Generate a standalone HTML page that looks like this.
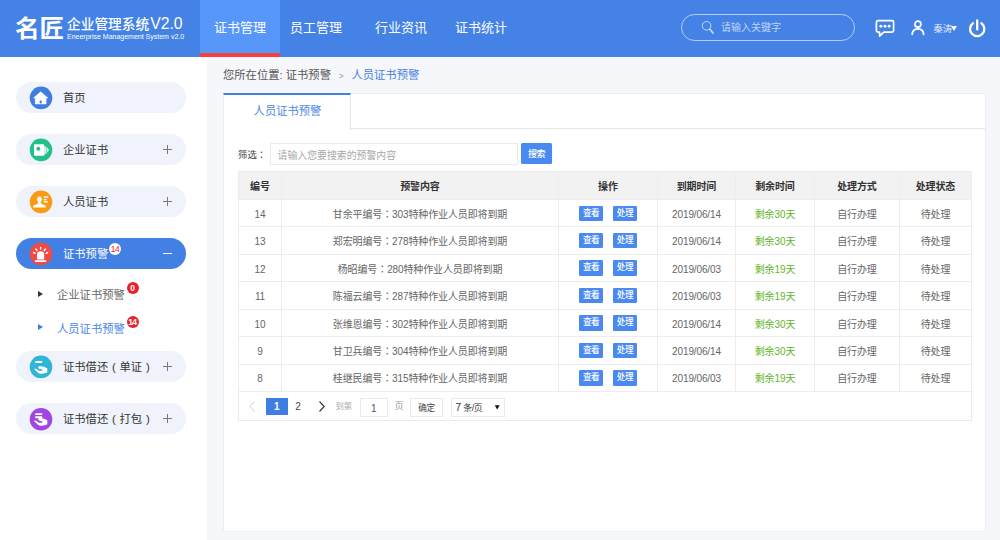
<!DOCTYPE html>
<html lang="zh-CN">
<head>
<meta charset="utf-8">
<title>企业管理系统V2.0</title>
<style>
*{box-sizing:border-box;margin:0;padding:0}
html,body{width:1000px;height:540px;overflow:hidden}
body{position:relative;background:#f6f7fb;font-family:"Liberation Sans","Noto Sans CJK SC",sans-serif;color:#333;font-size:11px}
.abs{position:absolute}
/* header */
#hd{position:absolute;left:0;top:0;width:1000px;height:57px;background:#4482e5}
#logo{position:absolute;left:14.8px;top:10.5px;font-size:23.6px;font-weight:700;color:#fff;letter-spacing:-0.2px;line-height:36px;white-space:nowrap;transform-origin:0 0;transform:scaleX(1.05)}
#t1{position:absolute;left:67px;top:13px;font-size:13.7px;font-weight:500;color:#fff;line-height:22px;white-space:nowrap}
#t2{position:absolute;left:67px;top:32px;font-size:7px;color:#fff;line-height:9px;white-space:nowrap}
.nav{position:absolute;top:0;height:57px;line-height:56px;color:#fff;font-size:13px;text-align:center;white-space:nowrap}
.nav.on{background:#5797fa;border-bottom:4px solid #f5403f;line-height:56px}
#srch{position:absolute;left:681px;top:14px;width:174px;height:27px;border:1px solid #b6cef5;border-radius:14px}
#srch span{position:absolute;left:39px;top:0;line-height:25px;font-size:10px;color:#c3d6f6;white-space:nowrap}
#uname{position:absolute;left:933.5px;top:20.5px;font-size:9.3px;color:#eaf1fd;line-height:16px;white-space:nowrap}
/* sidebar */
#sb{position:absolute;left:0;top:57px;width:207px;height:483px;background:#fff}
.pill{position:absolute;left:16px;width:170px;height:31px;border-radius:16px;background:#f0f3fb;font-size:11.3px;color:#333;line-height:31px}
.pill .ic{position:absolute;left:13px;top:4px;width:24px;height:24px}
.pill .tx{position:absolute;left:47px;top:1.2px;white-space:nowrap}
.pill .pm{position:absolute;left:147px;top:11px;width:9px;height:9px;font-size:0;color:transparent;overflow:hidden}
.pill .pm:before{content:"";position:absolute;left:0;top:4px;width:9px;height:1.2px;background:#7a7a7a}
.pill .pm:after{content:"";position:absolute;left:3.9px;top:0;width:1.2px;height:9px;background:#7a7a7a}
.pr{display:inline-block;width:11.3px;text-align:center;font-style:normal;letter-spacing:0;position:relative;top:-0.5px}
.pill.on{background:#4380e3;color:#fff}
.pill.on .pm:before{background:#fff;height:1.8px;top:3.7px}
.pill.on .pm:after{display:none}
.sub{position:absolute;left:57px;font-size:11.3px;line-height:16px;white-space:nowrap;color:#444}
.tri{position:absolute;left:38px;width:0;height:0;border-left:5px solid #333;border-top:3.5px solid transparent;border-bottom:3.5px solid transparent}
.bdg{position:absolute;width:12px;height:12px;border-radius:50%;background:#e8212a;color:#fff;font-size:8.5px;line-height:12px;text-align:center;font-weight:bold;letter-spacing:-0.6px;text-indent:-0.6px}
/* main */
#bc{position:absolute;left:223px;top:67px;font-size:11.3px;line-height:16px;color:#555;white-space:nowrap}
#bc b{font-weight:normal;color:#4380e3}
#panel{position:absolute;left:223px;top:93px;width:763px;height:439px;background:#fff;border:1px solid #eceef2}
#tabbar{position:absolute;left:0;top:0;width:761px;height:35px;border-bottom:1px solid #e6e6e6}
#tab{position:absolute;left:-1px;top:-1px;width:128px;height:37px;background:#fff;border-top:2px solid #4380e3;border-right:1px solid #e6e6e6;border-left:1px solid #eceef2;text-align:center;line-height:33px;font-size:11.3px;color:#4a85e8;padding-left:1px}
#flabel{position:absolute;left:238px;top:146.5px;font-size:9.4px;line-height:14px;color:#444;white-space:nowrap}
#finput{position:absolute;left:270px;top:143px;width:248px;height:21.5px;border:1px solid #ebebeb;background:#fff;font-size:9.9px;color:#a8a8a8;line-height:24.6px;padding-left:6.5px;overflow:hidden;white-space:nowrap}
#fbtn{position:absolute;left:521px;top:143px;width:31px;height:21.3px;background:#4a8af0;color:#fff;font-size:9px;line-height:23px;text-align:center;border-radius:1.5px;letter-spacing:-0.4px;font-weight:500}
table{position:absolute;left:238px;top:171px;width:733px;border-collapse:collapse;table-layout:fixed;font-size:10px;letter-spacing:-0.12px;color:#666}
th,td{border:1px solid #ededed;text-align:center;padding:0;white-space:nowrap;overflow:hidden}
th{height:28px;background:#f2f2f2;color:#333;font-weight:bold;font-size:10px}
td{height:27.46px}
td:first-child,td:nth-child(4){padding-top:2px}
.g{color:#62b52a}
.c{font-style:normal;font-family:"Noto Sans CJK TC","Noto Sans CJK SC",sans-serif}
.b{display:inline-block;width:23.5px;height:15.4px;background:#4a8af0;color:#fff;font-size:8.6px;line-height:15.5px;border-radius:1.2px;vertical-align:middle;letter-spacing:-0.4px;margin:0 5.15px;font-weight:500}
#pg{position:absolute;left:238px;top:391.5px;width:733.5px;height:29px;border:1px solid #ebebeb;border-top:0;font-size:10px;color:#555}
#pg span{position:absolute;top:5px;height:18px;line-height:18px;text-align:center;white-space:nowrap}
</style>
</head>
<body>
<div id="hd">
  <div id="logo">名匠</div>
  <div id="t1">企业管理系统<span style="font-size:15.8px;font-weight:normal;margin-left:1px">V2.0</span></div>
  <div id="t2">Eneerprise Management System v2.0</div>
  <div class="nav on" style="left:200px;width:80px">证书管理</div>
  <div class="nav" style="left:280px;width:72px">员工管理</div>
  <div class="nav" style="left:361px;width:80px">行业资讯</div>
  <div class="nav" style="left:441px;width:80px">证书统计</div>
  <div id="srch">
    <svg class="abs" style="left:19px;top:5px" width="14" height="15" viewBox="0 0 14 15"><circle cx="5.6" cy="5.8" r="4.3" fill="none" stroke="#c3d6f6" stroke-width="1"/><path d="M8.8 9.2 L12 13" stroke="#c3d6f6" stroke-width="1.8" stroke-linecap="round"/></svg>
    <span>请输入关键字</span>
  </div>
  <svg class="abs" style="left:875px;top:19px" width="20" height="19" viewBox="0 0 20 19"><path d="M3 1.6 h14 a1.6 1.6 0 0 1 1.6 1.6 v8.4 a1.6 1.6 0 0 1 -1.6 1.6 h-8.2 l-4.2 3.9 v-3.9 h-1.6 a1.6 1.6 0 0 1 -1.6 -1.6 v-8.4 a1.6 1.6 0 0 1 1.6 -1.6z" fill="none" stroke="#fff" stroke-width="1.7" stroke-linejoin="round"/><circle cx="5.9" cy="7.3" r="1.45" fill="#fff"/><circle cx="10" cy="7.3" r="1.45" fill="#fff"/><circle cx="14.1" cy="7.3" r="1.45" fill="#fff"/></svg>
  <svg class="abs" style="left:910px;top:19px" width="16" height="17" viewBox="0 0 16 17"><circle cx="7.9" cy="5.2" r="3.0" fill="none" stroke="#fff" stroke-width="1.7"/><path d="M2.2 15.4 c0.2 -3.6 2.4 -5.6 5.7 -5.6 s5.5 2 5.7 5.6" fill="none" stroke="#fff" stroke-width="1.7" stroke-linecap="round"/></svg>
  <div id="uname">秦涛</div>
  <div class="abs" style="left:950.5px;top:25.5px;width:0;height:0;border-top:5px solid #fff;border-left:3px solid transparent;border-right:3px solid transparent"></div>
  <svg class="abs" style="left:967px;top:18px" width="20" height="21" viewBox="0 0 20 21"><path d="M6.0 5.3 a7.1 7.1 0 1 0 8.4 0" fill="none" stroke="#fff" stroke-width="2.3" stroke-linecap="round"/><path d="M10.2 2.4 v9" stroke="#fff" stroke-width="2.3" stroke-linecap="round"/></svg>
</div>

<div id="sb">
  <div class="pill" style="top:25px"><svg class="ic" width="24" height="24" viewBox="0 0 24 24"><g transform="translate(0.5,0.4)"><circle cx="11.5" cy="11.5" r="11.3" fill="#3f7de0"/><path d="M11.2 5.4 L18.3 11.5 H16.6 V17.5 H5.8 V11.5 H4.1 Z" fill="#fff" stroke="#fff" stroke-width="0.6" stroke-linejoin="round"/><ellipse cx="11.2" cy="15.5" rx="1.15" ry="1.7" fill="#3f7de0"/></g></svg><div class="tx">首页</div></div>
  <div class="pill" style="top:77px"><svg class="ic" width="24" height="24" viewBox="0 0 24 24"><g transform="translate(0.5,0.4)"><circle cx="11.5" cy="11.5" r="11.3" fill="#22c08a"/><rect x="4.5" y="5.9" width="10.1" height="11.5" rx="0.8" fill="#fff"/><circle cx="8.8" cy="10.3" r="2" fill="#22c08a"/><path d="M14.6 7.0 C16.7 8 18.7 9.8 19.6 11.4 C18.8 13.4 16.6 15.4 14.6 16.6 Z" fill="#fff" fill-opacity="0.85"/><path d="M16.4 8.6 C17.2 10.4 17.2 13 16.3 15.2" fill="none" stroke="#22c08a" stroke-width="0.7" stroke-opacity="0.7"/></g></svg><div class="tx">企业证书</div><div class="pm">+</div></div>
  <div class="pill" style="top:129px"><svg class="ic" width="24" height="24" viewBox="0 0 24 24"><g transform="translate(0.5,0.4)"><circle cx="11.5" cy="11.5" r="11.3" fill="#fb9b14"/><path d="M9.9 6.2 c1.5 0 2.5 1.1 2.5 2.7 c0 1.2 -0.5 2.2 -1.2 2.8 v0.9 c0 0.5 0.3 0.8 0.9 1 l2.6 0.9 c1.1 0.4 1.6 1.1 1.6 2.2 v0.3 H3.6 v-0.3 c0 -1.1 0.5 -1.8 1.6 -2.2 l2.6 -0.9 c0.6 -0.2 0.9 -0.5 0.9 -1 v-0.9 c-0.7 -0.6 -1.2 -1.6 -1.2 -2.8 c0 -1.6 1 -2.7 2.4 -2.7z" fill="#fff"/><rect x="14.2" y="5.9" width="4.4" height="1.4" fill="#fff"/><rect x="14.2" y="8.5" width="2.8" height="1.4" fill="#fff"/><rect x="14.2" y="10.7" width="4.2" height="1.4" fill="#fff"/></g></svg><div class="tx">人员证书</div><div class="pm">+</div></div>
  <div class="pill on" style="top:181px"><svg class="ic" width="24" height="24" viewBox="0 0 24 24"><g transform="translate(0.5,0.4)"><circle cx="11.5" cy="11.5" r="11.3" fill="#f04a45"/><path d="M7.5 17.2 V12.4 a3.6 3.6 0 0 1 7.2 0 V17.2 Z" fill="#fff"/><rect x="5.5" y="17.9" width="11.2" height="1.6" rx="0.3" fill="#fff"/><path d="M11.1 5.0 V6.6 M6.3 6.7 L7.5 8.0 M15.9 6.7 L14.7 8.0 M4.1 10.2 L5.6 10.8 M18.1 10.2 L16.6 10.8" stroke="#fff" stroke-width="1.5" stroke-linecap="round"/></g></svg><div class="tx">证书预警</div><div class="pm">−</div>
    <div class="bdg" style="left:93.3px;top:5px;background:#fff;color:#e8212a;font-weight:normal">14</div></div>
  <div class="tri" style="top:233.6px"></div><div class="sub" style="top:230px;color:#666">企业证书预警</div><div class="bdg" style="left:126.6px;top:224.5px">0</div>
  <div class="tri" style="top:267px;border-left-color:#3e7de2"></div><div class="sub" style="top:264px;color:#4a85e8">人员证书预警</div><div class="bdg" style="left:126.6px;top:258.5px">14</div>
  <div class="pill" style="top:294px"><svg class="ic" width="24" height="24" viewBox="0 0 24 24"><g transform="translate(0.5,0.4)"><circle cx="11.5" cy="11.5" r="11.3" fill="#2fb5d5"/><rect x="5.5" y="5.6" width="7.4" height="2.1" rx="1.05" fill="#fff"/><path d="M4.5 13.6 C5.5 13 6.6 13.2 7.4 13.9 L9 15.2 C10 15.6 11.6 15.7 12.8 15.2 C13.4 14.9 13.3 14.3 12.7 14.2 L9.6 13.3 C8.5 13 8.4 11.2 9.6 10.8 C11 10.6 13.4 11 15.2 11.7 L17.8 13 V17 L16.8 17.4 C14.6 18.2 12.4 18.5 10.6 18.4 C9.6 18.3 8.8 17.8 8.2 17.1 Z" fill="#fff"/></g></svg><div class="tx">证书借还<i class="pr">(</i>单证<i class="pr">)</i></div><div class="pm">+</div></div>
  <div class="pill" style="top:346px"><svg class="ic" width="24" height="24" viewBox="0 0 24 24"><g transform="translate(0.5,0.7)"><circle cx="11.5" cy="11.5" r="11.3" fill="#9f47e0"/><rect x="5.5" y="5.5" width="7.4" height="1.8" rx="0.9" fill="#fff"/><rect x="5.5" y="8.6" width="7.4" height="1.9" rx="0.95" fill="#fff"/><path d="M4.5 13.6 C5.5 13 6.6 13.2 7.4 13.9 L9 15.2 C10 15.6 11.6 15.7 12.8 15.2 C13.4 14.9 13.3 14.3 12.7 14.2 L9.6 13.3 C8.5 13 8.4 11.2 9.6 10.8 C11 10.6 13.4 11 15.2 11.7 L17.8 13 V17 L16.8 17.4 C14.6 18.2 12.4 18.5 10.6 18.4 C9.6 18.3 8.8 17.8 8.2 17.1 Z" transform="translate(0,-0.4)" fill="#fff"/></g></svg><div class="tx">证书借还<i class="pr">(</i>打包<i class="pr">)</i></div><div class="pm">+</div></div>
</div>

<div id="bc">您所在位置: 证书预警<span style="display:inline-block;width:20.5px;text-align:center;font-size:8.5px;color:#999;position:relative;top:-0.5px">&gt;</span><b>人员证书预警</b></div>
<div id="panel">
  <div id="tabbar"><div id="tab">人员证书预警</div></div>
</div>
<div id="flabel">筛选<i class="c" lang="zh-TW">：</i></div>
<div id="finput">请输入您要搜索的预警内容</div>
<div id="fbtn">搜索</div>

<table>
<colgroup><col style="width:43px"><col style="width:277px"><col style="width:99px"><col style="width:78px"><col style="width:79px"><col style="width:85px"><col style="width:72px"></colgroup>
<tr><th>编号</th><th>预警内容</th><th>操作</th><th>到期时间</th><th>剩余时间</th><th>处理方式</th><th>处理状态</th></tr>
<tr><td>14</td><td>甘余平编号<i class="c" lang="zh-TW">：</i>303特种作业人员即将到期</td><td><span class="b">查看</span><span class="b">处理</span></td><td>2019/06/14</td><td class="g">剩余30天</td><td>自行办理</td><td>待处理</td></tr>
<tr><td>13</td><td>郑宏明编号<i class="c" lang="zh-TW">：</i>278特种作业人员即将到期</td><td><span class="b">查看</span><span class="b">处理</span></td><td>2019/06/14</td><td class="g">剩余30天</td><td>自行办理</td><td>待处理</td></tr>
<tr><td>12</td><td>杨昭编号<i class="c" lang="zh-TW">：</i>280特种作业人员即将到期</td><td><span class="b">查看</span><span class="b">处理</span></td><td>2019/06/03</td><td class="g">剩余19天</td><td>自行办理</td><td>待处理</td></tr>
<tr><td>11</td><td>陈福云编号<i class="c" lang="zh-TW">：</i>287特种作业人员即将到期</td><td><span class="b">查看</span><span class="b">处理</span></td><td>2019/06/03</td><td class="g">剩余19天</td><td>自行办理</td><td>待处理</td></tr>
<tr><td>10</td><td>张维恩编号<i class="c" lang="zh-TW">：</i>302特种作业人员即将到期</td><td><span class="b">查看</span><span class="b">处理</span></td><td>2019/06/14</td><td class="g">剩余30天</td><td>自行办理</td><td>待处理</td></tr>
<tr><td>9</td><td>甘卫兵编号<i class="c" lang="zh-TW">：</i>304特种作业人员即将到期</td><td><span class="b">查看</span><span class="b">处理</span></td><td>2019/06/14</td><td class="g">剩余30天</td><td>自行办理</td><td>待处理</td></tr>
<tr><td>8</td><td>桂继民编号<i class="c" lang="zh-TW">：</i>315特种作业人员即将到期</td><td><span class="b">查看</span><span class="b">处理</span></td><td>2019/06/03</td><td class="g">剩余19天</td><td>自行办理</td><td>待处理</td></tr>
</table>
<div id="pg">
  <svg class="abs" style="left:9px;top:8px" width="8" height="13" viewBox="0 0 8 13"><path d="M6.5 1.5 L1.8 6.5 L6.5 11.5" fill="none" stroke="#cfcfcf" stroke-width="1"/></svg>
  <span style="left:27px;top:6px;width:21.6px;height:17.6px;line-height:18px;background:#3e7de2;color:#fff;font-weight:bold;font-size:10px">1</span>
  <span style="left:53px;top:6px;width:12px;font-size:10px;color:#444">2</span>
  <svg class="abs" style="left:79px;top:8px" width="8" height="13" viewBox="0 0 8 13"><path d="M1.5 1.5 L6.2 6.5 L1.5 11.5" fill="none" stroke="#333" stroke-width="1.1"/></svg>
  <span style="left:96.5px;color:#aaa;font-size:8.3px">到第</span>
  <span style="left:120.5px;top:6px;width:28.5px;border:1px solid #ebebeb;height:19px;line-height:19px;color:#555;font-size:10px">1</span>
  <span style="left:155.5px;color:#999;font-size:9px">页</span>
  <span style="left:171px;top:6px;width:33px;border:1px solid #ebebeb;height:19px;line-height:18px;color:#444;font-size:8.6px;letter-spacing:-0.3px">确定</span>
  <span style="left:211.5px;top:6px;width:54px;border:1px solid #ebebeb;height:19px;line-height:18px;text-align:left;padding-left:4px;color:#333;font-size:8.8px;letter-spacing:-0.3px"><span style="position:static;font-size:10px;letter-spacing:0">7</span> 条/页</span>
  <svg class="abs" style="left:255px;top:12px" width="7" height="6" viewBox="0 0 7 6"><path d="M0.8 1.2 H5.6 L3.2 5.6 Z" fill="#111"/></svg>
</div>
</body>
</html>
